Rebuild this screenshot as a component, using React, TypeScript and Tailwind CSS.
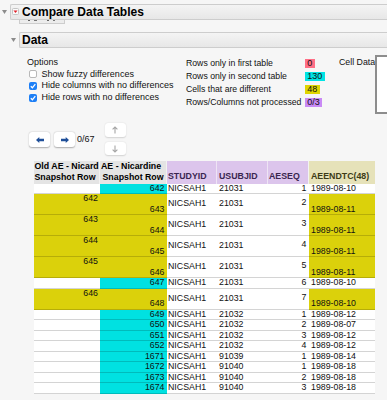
import React from 'react';

type Row = { d: boolean; a: string; b: string; s: string; u: string; q: string; t: string };

const rows: Row[] = [
  { d: false, a: '', b: '642', s: 'NICSAH1', u: '21031', q: '1', t: '1989-08-10' },
  { d: true, a: '642', b: '643', s: 'NICSAH1', u: '21031', q: '2', t: '1989-08-11' },
  { d: true, a: '643', b: '644', s: 'NICSAH1', u: '21031', q: '3', t: '1989-08-11' },
  { d: true, a: '644', b: '645', s: 'NICSAH1', u: '21031', q: '4', t: '1989-08-11' },
  { d: true, a: '645', b: '646', s: 'NICSAH1', u: '21031', q: '5', t: '1989-08-11' },
  { d: false, a: '', b: '647', s: 'NICSAH1', u: '21031', q: '6', t: '1989-08-10' },
  { d: true, a: '646', b: '648', s: 'NICSAH1', u: '21031', q: '7', t: '1989-08-10' },
  { d: false, a: '', b: '649', s: 'NICSAH1', u: '21032', q: '1', t: '1989-08-12' },
  { d: false, a: '', b: '650', s: 'NICSAH1', u: '21032', q: '2', t: '1989-08-07' },
  { d: false, a: '', b: '651', s: 'NICSAH1', u: '21032', q: '3', t: '1989-08-12' },
  { d: false, a: '', b: '652', s: 'NICSAH1', u: '21032', q: '4', t: '1989-08-12' },
  { d: false, a: '', b: '1671', s: 'NICSAH1', u: '91039', q: '1', t: '1989-08-14' },
  { d: false, a: '', b: '1672', s: 'NICSAH1', u: '91040', q: '1', t: '1989-08-18' },
  { d: false, a: '', b: '1673', s: 'NICSAH1', u: '91040', q: '2', t: '1989-08-18' },
  { d: false, a: '', b: '1674', s: 'NICSAH1', u: '91040', q: '3', t: '1989-08-18' },
];

const summary = [
  { label: 'Rows only in first table', value: '0', cls: 'bg-[#ff6f86]' },
  { label: 'Rows only in second table', value: '130', cls: 'bg-[#00e4e4]' },
  { label: 'Cells that are different', value: '48', cls: 'bg-[#dfd500]' },
  { label: 'Rows/Columns not processed', value: '0/3', cls: 'bg-[#c98af5]' },
];

function Tri() {
  return (
    <svg width="5" height="4" viewBox="0 0 5 4">
      <path d="M0 0 H5 L2.5 4 Z" fill="#8c8c8c" />
    </svg>
  );
}

function RedIcon() {
  return (
    <svg width="7" height="7" viewBox="0 0 7 7" className="ml-[1px] shrink-0">
      <rect x="0.5" y="0.5" width="6" height="6" rx="1" fill="#fafafa" stroke="#c4c4c4" />
      <path d="M1.5 2.5 H5.5 L3.5 5 Z" fill="#e0202a" />
    </svg>
  );
}

function Check({ on }: { on: boolean }) {
  if (!on) return <span className="w-[8px] h-[8px] rounded-[2px] bg-white border border-[#b8b8b8] shrink-0" />;
  return (
    <span className="w-[8px] h-[8px] rounded-[2px] bg-[#1d7ff6] flex items-center justify-center shrink-0">
      <svg width="8" height="8" viewBox="0 0 8 8">
        <path d="M1.8 4.2 L3.4 5.8 L6.3 2.2" fill="none" stroke="white" strokeWidth="1.3" />
      </svg>
    </span>
  );
}

function NavBtn({ dir }: { dir: 'left' | 'right' }) {
  return (
    <div className="w-[21px] h-[15px] rounded-[3px] bg-white shadow-[0_0.5px_1.5px_rgba(0,0,0,0.3)] flex items-center justify-center">
      <svg width="8" height="6" viewBox="0 0 8 6" className={dir === 'right' ? 'rotate-180' : ''}>
        <path d="M0 3 L3.3 0 V1.8 H8 V4.2 H3.3 V6 Z" fill="#1f4f99" />
      </svg>
    </div>
  );
}

function ArrowBtn({ dir, h }: { dir: 'up' | 'down'; h: string }) {
  return (
    <div className={`w-[21px] ${h} rounded-[3px] bg-white shadow-[0_0.5px_1.5px_rgba(0,0,0,0.15)] flex items-center justify-center`}>
      <svg width="6" height="8" viewBox="0 0 6 8" className={dir === 'down' ? 'rotate-180' : ''}>
        <path d="M3 7.5 V1 M0.6 3.4 L3 1 L5.4 3.4" fill="none" stroke="#a6a6a6" strokeWidth="1.1" />
      </svg>
    </div>
  );
}

const line = 'border-b border-black/[0.17] shrink-0 flex';

function DataRow({ r }: { r: Row }) {
  const h = r.d ? 'h-[21px]' : 'h-[10.5px]';
  const left = r.d ? 'bg-[#dbd10b]' : 'bg-white';
  return (
    <div className="flex leading-[9.5px]">
      <div className={`${line} ${h} w-[66px] ${left} justify-end pr-[2px] items-start`}>{r.a}</div>
      <div className={`${line} ${h} w-[66.5px] ${r.d ? 'bg-[#dbd10b] items-end' : 'bg-[#00e1e1] items-center'} justify-end pr-[2px]`}>{r.b}</div>
      <div className={`${line} ${h} w-[50px] bg-white pl-[1.5px] items-center`}>{r.s}</div>
      <div className={`${line} ${h} w-[51px] bg-white pl-[2.5px] items-center`}>{r.u}</div>
      <div className={`${line} ${h} w-[41px] bg-white justify-end pr-[2px] ${r.d ? 'items-center pb-[2px]' : 'items-center'}`}>{r.q}</div>
      <div className={`${line} ${h} w-[66px] pl-[2.5px] ${r.d ? 'bg-[#dbd10b] items-end' : 'bg-white items-center'}`}>{r.t}</div>
    </div>
  );
}

export default function App() {
  return (
    <div className="w-[387px] h-[400px] overflow-hidden bg-[#f6f6f6] text-[#111] font-['Liberation_Sans',Arial,sans-serif]">
      {/* report title */}
      <div className="flex items-start pt-[4px]">
        <div className="w-[10px] pl-[1.5px] pt-[5.5px]">
          <Tri />
        </div>
        <div className="flex-1 h-[15.5px] flex items-center border border-r-0 border-[#cdcdcd] rounded-l-[2px] bg-gradient-to-b from-[#f4f4f4] to-[#e7e7e7]">
          <RedIcon />
          <span className="ml-[3px] text-[12px] font-bold leading-none text-black">Compare Data Tables</span>
        </div>
      </div>
      {/* hidden outline node peeking out below the title */}
      <div className="ml-[19px] w-[46px] h-[4px] border-x border-b border-[#cdcdcd] bg-[#ececec] flex items-start gap-[4px] pl-[8px]">
        <span className="w-[2px] h-[1.5px] bg-[#666]" />
        <span className="w-[3px] h-[1.5px] bg-[#777]" />
        <span className="w-[2px] h-[1.5px] bg-[#666] ml-[6px]" />
        <span className="w-[2px] h-[1.5px] bg-[#777]" />
      </div>

      {/* Data outline */}
      <div className="flex items-start mt-[8.5px]">
        <div className="w-[19px] pl-[11px] pt-[5.5px]">
          <Tri />
        </div>
        <div className="flex-1 h-[15.5px] flex items-center pl-[2px] border border-r-0 border-[#cdcdcd] rounded-l-[2px] bg-gradient-to-b from-[#f4f4f4] to-[#e7e7e7]">
          <span className="text-[12px] font-bold leading-none text-black">Data</span>
        </div>
      </div>

      <div className="flex items-start mt-[7.5px] text-[9px]">
        <div className="ml-[27px] w-[159px] shrink-0 pt-[1.3px]">
          <div className="h-[12px] leading-[12px]">Options</div>
          {[
            ['Show fuzzy differences', false],
            ['Hide columns with no differences', true],
            ['Hide rows with no differences', true],
          ].map(([t, on]) => (
            <div key={t as string} className="h-[11.7px] flex items-center pl-[2px]">
              <Check on={on as boolean} />
              <span className="ml-[4.5px] leading-none">{t as string}</span>
            </div>
          ))}
        </div>
        <div className="w-[153px] shrink-0 pt-[2px]">
          {summary.map((s) => (
            <div key={s.label} className="h-[13px] flex items-center">
              <span className="w-[119px] shrink-0 leading-none whitespace-nowrap text-[8.7px]">{s.label}</span>
              <span className={`${s.cls} h-[9.5px] px-[2.3px] leading-[9.5px] text-[9px]`}>{s.value}</span>
            </div>
          ))}
        </div>
        <div className="pt-[1px] leading-[12px] whitespace-nowrap w-[36px] shrink-0 text-[8.8px]">Cell Data</div>
        <div className="w-[20px] h-[59px] border-2 border-r-0 border-[#8d8d8d] bg-white shrink-0" />
      </div>

      {/* navigation */}
      <div className="flex items-start mt-[9px] ml-[29px]">
        <div className="flex items-center gap-[4px] mt-[9px]">
          <NavBtn dir="left" />
          <NavBtn dir="right" />
          <span className="-ml-[2px] text-[9px] leading-none">0/67</span>
        </div>
        <div className="ml-[10px] flex flex-col gap-[5px]">
          <ArrowBtn dir="up" h="h-[14px]" />
          <ArrowBtn dir="down" h="h-[13px]" />
        </div>
      </div>

      {/* comparison table */}
      <div className="ml-[34px] mt-[6px] text-[8.8px]">
        <div className="flex h-[22.5px] font-bold leading-[11px]">
          <div className="w-[66px] shrink-0 bg-[#e4e4e4] border-r border-[#f2f2f2] pl-[0.5px] overflow-hidden whitespace-nowrap text-black">
            <div>Old AE - Nicard</div>
            <div>Snapshot Row</div>
          </div>
          <div className="w-[66.5px] shrink-0 bg-[#e4e4e4] border-r border-[#f2f2f2] pl-[1px] overflow-hidden whitespace-nowrap text-black">
            <div>AE - Nicardine</div>
            <div className="pl-[1.5px]">Snapshot Row</div>
          </div>
          <div className="w-[50px] shrink-0 bg-[#dcc5ec] border-r border-[#eee4f4] flex items-end pb-[1.5px] pl-[1.5px] text-[#3a2650]">STUDYID</div>
          <div className="w-[51px] shrink-0 bg-[#dcc5ec] border-r border-[#eee4f4] flex items-end pb-[1.5px] pl-[2.5px] text-[#3a2650]">USUBJID</div>
          <div className="w-[41px] shrink-0 bg-[#dcc5ec] border-r border-[#f2f2f2] flex items-end pb-[1.5px] pl-[1.5px] text-[#3a2650]">AESEQ</div>
          <div className="w-[66px] shrink-0 bg-[#e6e2b9] flex items-end pb-[1.5px] pl-[2.5px] text-[#3d3b16]">AEENDTC(48)</div>
        </div>
        {rows.map((r, i) => (
          <DataRow key={i} r={r} />
        ))}
      </div>
    </div>
  );
}
